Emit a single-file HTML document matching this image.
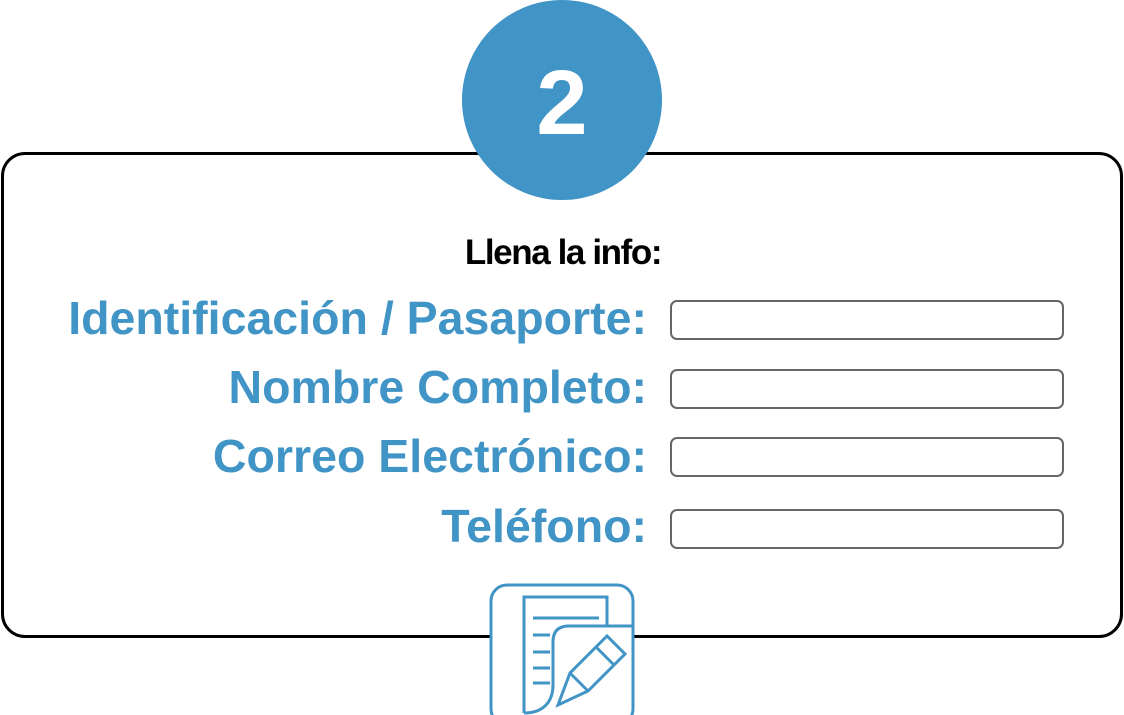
<!DOCTYPE html>
<html><head><style>
html,body{margin:0;padding:0;background:#fff;width:1124px;height:715px;overflow:hidden;position:relative;font-family:"Liberation Sans",sans-serif}
.box{position:absolute;left:1px;top:152px;width:1116px;height:480px;border:3px solid #000;border-radius:24px}
.circle{position:absolute;left:462px;top:0;width:200px;height:200px;border-radius:50%;background:#4194C6;color:#fff;font-weight:bold;font-size:92px;text-align:center;line-height:206px}
.title{position:absolute;left:363px;width:400px;top:233px;text-align:center;font-weight:bold;font-size:35px;letter-spacing:-1.4px;color:#000}
.lbl{position:absolute;right:477px;color:#4194C6;font-weight:bold;font-size:46.5px;white-space:nowrap;line-height:40px}
.in{position:absolute;left:670px;width:390px;height:36px;border:2px solid #666;border-radius:7px}
</style></head><body>
<div class="box"></div>
<div class="circle">2</div>
<div class="title">Llena la info:</div>
<div class="lbl" style="top:298px">Identificación / Pasaporte:</div>
<div class="in" style="top:300px"></div>
<div class="lbl" style="top:367px">Nombre Completo:</div>
<div class="in" style="top:369px"></div>
<div class="lbl" style="top:436px">Correo Electrónico:</div>
<div class="in" style="top:437px"></div>
<div class="lbl" style="top:506px">Teléfono:</div>
<div class="in" style="top:509px"></div>
<svg style="position:absolute;left:0;top:0" width="1124" height="715">
<g fill="none" stroke="#4194C6" stroke-width="3">
<rect x="491" y="585" width="142" height="140" rx="16" fill="#fff"/>
<path d="M524 713 V597 H607 V626"/>
<path d="M533 618 H599 M533 635 H550 M533 652 H550 M533 668 H550 M533 683 H550"/>
<path d="M524 713 C545 713 553 700 553 685 V642 Q553 626 569 626 H633" fill="#fff"/>
<path d="M524 713 V597"/>
<path d="M558 705 L570 673 L607 636 L625 654 L588 691 Z M570 673 L588 691 M596 647 L614 665"/>
</g>
</svg>
</body></html>
